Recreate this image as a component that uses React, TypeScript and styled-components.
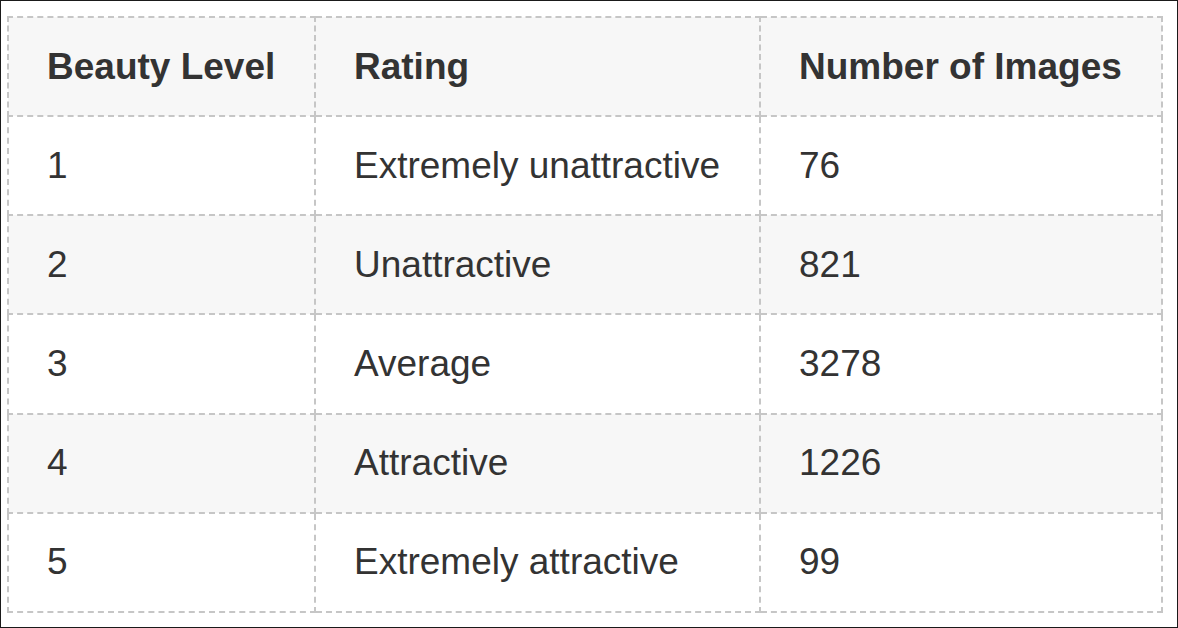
import React from "react";
import styled, { createGlobalStyle } from "styled-components";

const GlobalStyle = createGlobalStyle`
  html, body {
    margin: 0;
    padding: 0;
    background: #ffffff;
  }
  body {
    font-family: "Liberation Sans", Arial, Helvetica, sans-serif;
  }
`;

const Frame = styled.div`
  box-sizing: border-box;
  width: 1178px;
  height: 628px;
  border: 1px solid #1a1a1a;
  padding: 15px 16px 15px 6px;
  background: #ffffff;
`;

const Table = styled.table`
  width: 1154px;
  height: 597px;
  border-collapse: collapse;
  table-layout: fixed;
  color: #333333;
  font-size: 37px;
`;

const Row = styled.tr<{ $shaded?: boolean }>`
  height: 99px;
  background: ${(p) => (p.$shaded ? "#f7f7f7" : "#ffffff")};
`;

const HeadCell = styled.th`
  border: 2px dashed #c6c6c6;
  padding: 0 0 0 38px;
  text-align: left;
  font-weight: 700;
  vertical-align: middle;
  white-space: nowrap;
`;

const Cell = styled.td`
  border: 2px dashed #c6c6c6;
  padding: 0 0 0 38px;
  text-align: left;
  font-weight: 400;
  vertical-align: middle;
  white-space: nowrap;
`;

const ROWS = [
  { level: 1, rating: "Extremely unattractive", count: 76 },
  { level: 2, rating: "Unattractive", count: 821 },
  { level: 3, rating: "Average", count: 3278 },
  { level: 4, rating: "Attractive", count: 1226 },
  { level: 5, rating: "Extremely attractive", count: 99 },
];

const App = () => {
  return (
    <>
      <GlobalStyle />
      <Frame>
        <Table>
          <colgroup>
            <col style={{ width: 307 }} />
            <col style={{ width: 445 }} />
            <col style={{ width: 402 }} />
          </colgroup>
          <thead>
            <Row $shaded>
              <HeadCell>Beauty Level</HeadCell>
              <HeadCell>Rating</HeadCell>
              <HeadCell>Number of Images</HeadCell>
            </Row>
          </thead>
          <tbody>
            {ROWS.map((r) => (
              <Row key={r.level} $shaded={r.level % 2 === 0}>
                <Cell>{r.level}</Cell>
                <Cell>{r.rating}</Cell>
                <Cell>{r.count}</Cell>
              </Row>
            ))}
          </tbody>
        </Table>
      </Frame>
    </>
  );
};

export default App;
